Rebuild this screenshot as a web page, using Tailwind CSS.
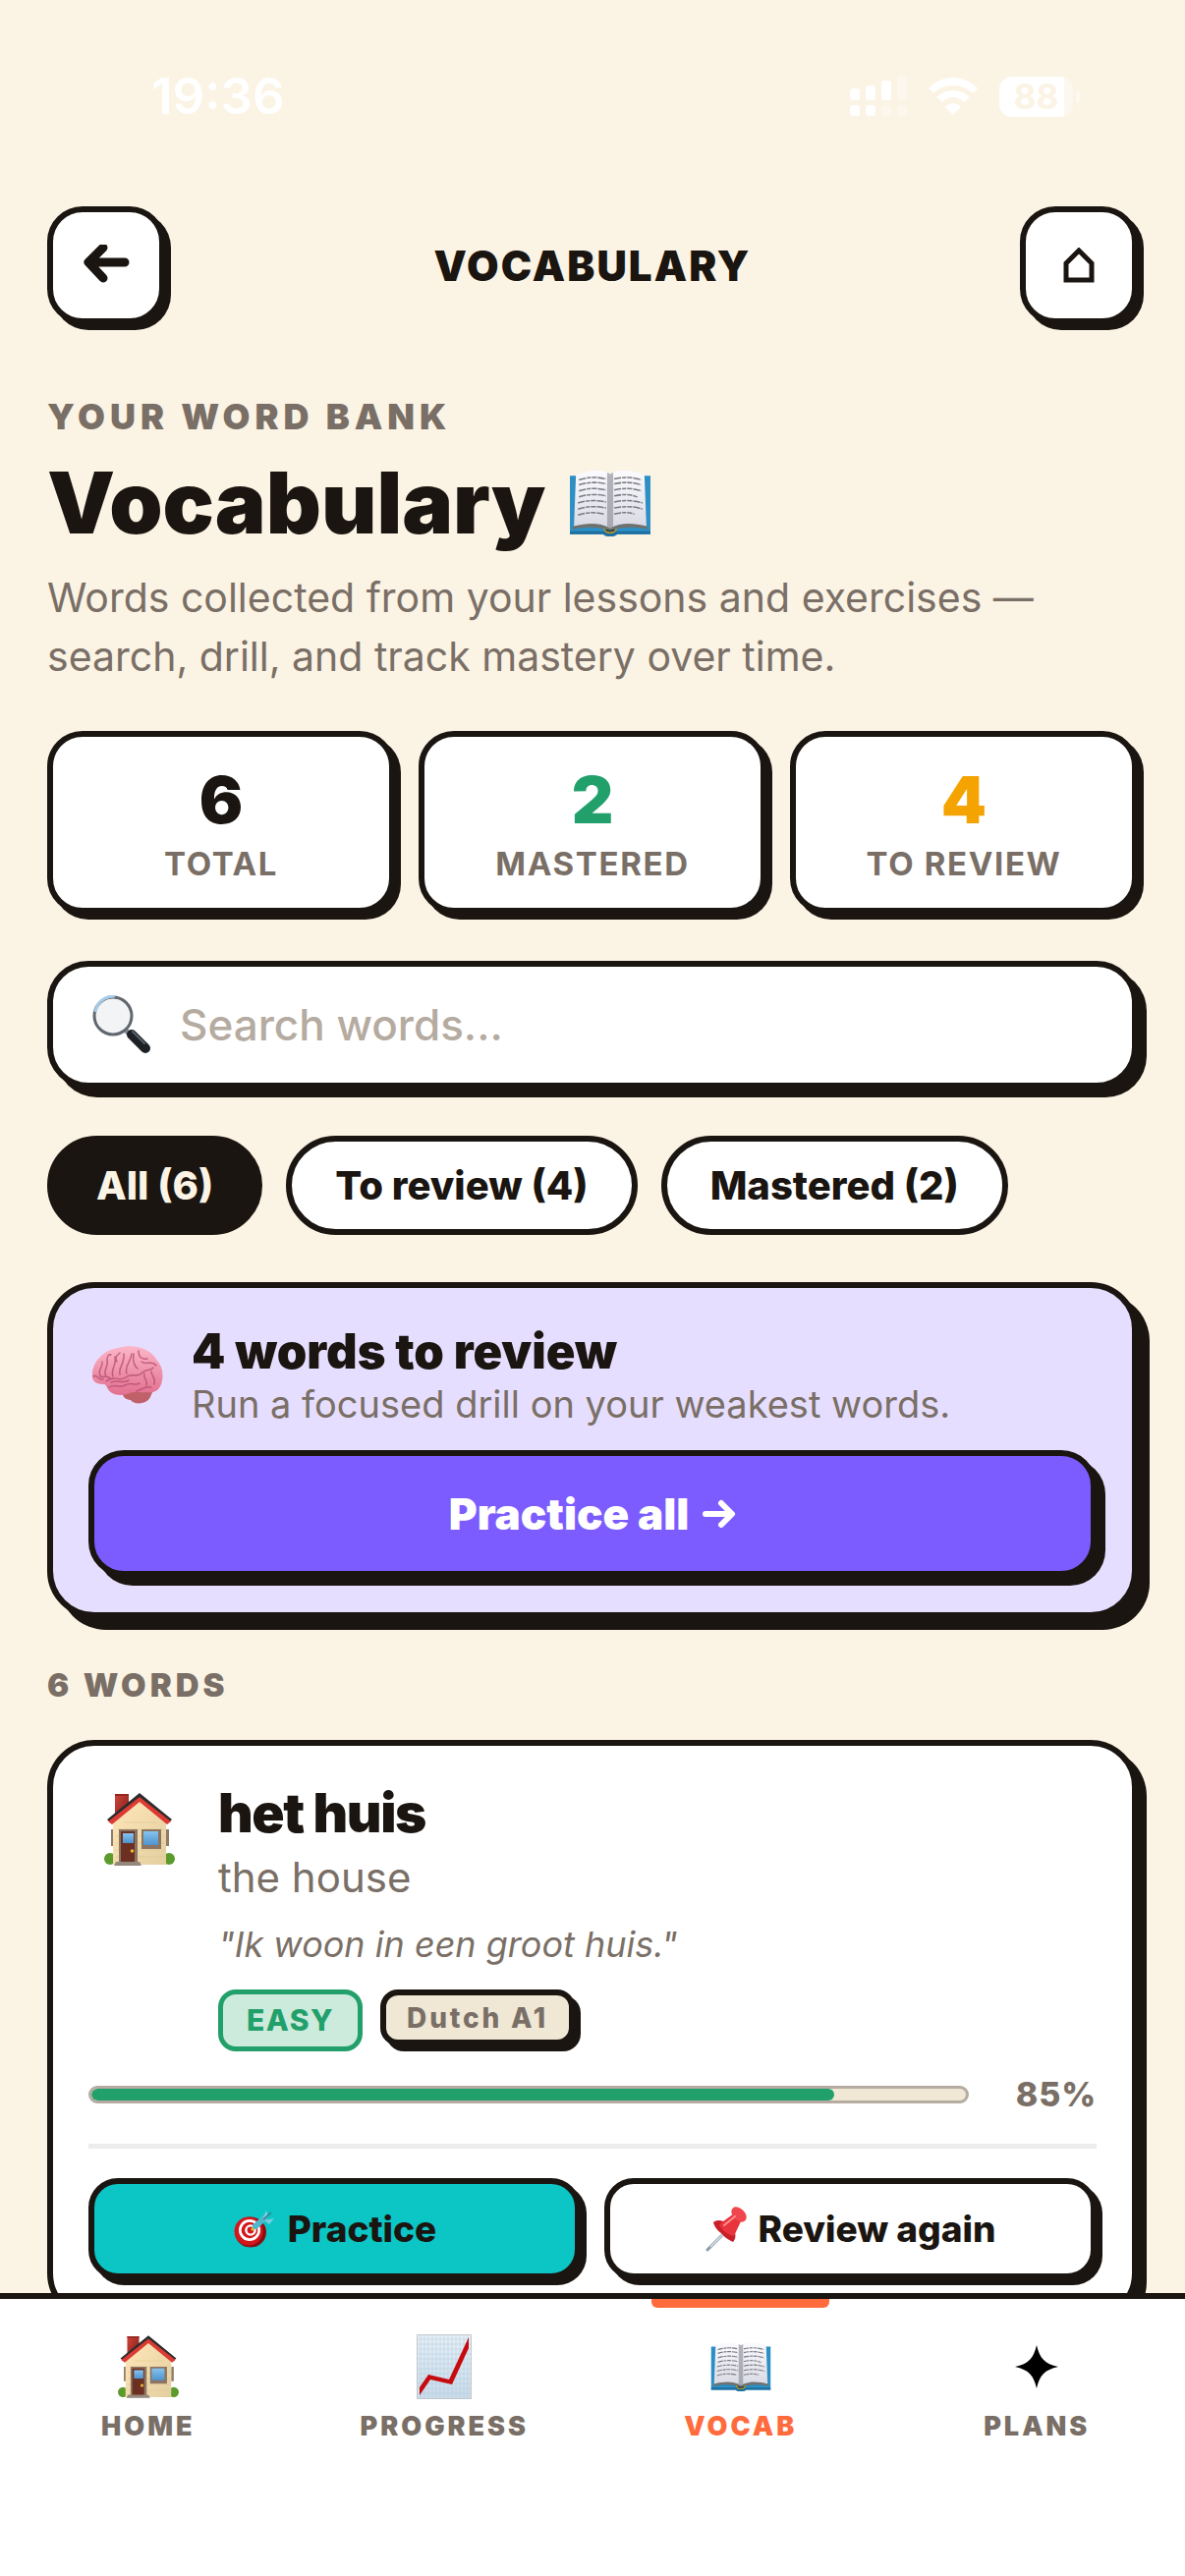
<!DOCTYPE html>
<html lang="en">

<head>
    <meta charset="UTF-8">
    <meta name="viewport" content="width=device-width, initial-scale=1.0">
    <title>Vocabulary</title>
    <script src="https://cdn.jsdelivr.net/npm/@tailwindcss/browser@4"></script>
</head>

<body class="h-screen flex flex-col bg-[#fbf3e4] text-[#1a1510] font-['Inter','Liberation_Sans',sans-serif]">
    <!-- Shared icons -->
    <svg class="absolute size-0" aria-hidden="true">
        <defs>
            <linearGradient id="page" x1="0" y1="0" x2="0" y2="1">
                <stop offset="0" stop-color="#fbfbff" />
                <stop offset="1" stop-color="#d9d9e4" />
            </linearGradient>
            <linearGradient id="wall" x1="0" y1="0" x2="1" y2="1">
                <stop offset="0" stop-color="#ffe6b8" />
                <stop offset="1" stop-color="#e3cfa0" />
            </linearGradient>
            <linearGradient id="brick" x1="0" y1="0" x2="1" y2="1">
                <stop offset="0" stop-color="#d1453a" />
                <stop offset="1" stop-color="#7c1d18" />
            </linearGradient>
            <linearGradient id="glass" x1="0" y1="0" x2="0" y2="1">
                <stop offset="0" stop-color="#86c3ee" />
                <stop offset="1" stop-color="#4f94cf" />
            </linearGradient>
            <linearGradient id="pink" x1="0" y1="0" x2="0" y2="1">
                <stop offset="0" stop-color="#fbb6c8" />
                <stop offset="1" stop-color="#e2708f" />
            </linearGradient>
            <linearGradient id="sheet" x1="0" y1="0" x2="0" y2="1">
                <stop offset="0" stop-color="#e9eff5" />
                <stop offset="1" stop-color="#cbdbe8" />
            </linearGradient>
        </defs>
        <symbol id="icon-house" viewBox="0 0 72 74">
            <circle cx="6" cy="67" r="6" fill="#5d9a2c" />
            <circle cx="66" cy="67" r="6" fill="#5d9a2c" />
            <path d="M7 37h3v17H7zM63 37h3v17h-3z" fill="#8f7b68" />
            <path d="M9 30 36 7l27 23v43H9z" fill="url(#wall)" />
            <path d="M12 44h50M12 51h50M12 58h50M12 65h50M20 30h33M14 37h46" stroke="#dfc48f" stroke-width="1" opacity=".5" />
            <path d="M11 1h14v14L11 26z" fill="url(#brick)" />
            <path d="M11 1h14v2H11z" fill="#96261f" />
            <path d="M3 27 36 0l33 27-3 3L36 5 6 30z" fill="#2a2b2e" />
            <path d="M4 29 36 4l32 25-4 3L36 9 8 32z" fill="#db3b33" />
            <path d="M15 37h19v34H15z" fill="#8c7462" />
            <path d="M17 39h14v32H17z" fill="#6b3022" />
            <path d="M19 41h11v10H19z" fill="url(#glass)" />
            <circle cx="28.500" cy="59" r="1.800" fill="#f2b830" />
            <path d="M38 37h20v20H38z" fill="#8c7462" />
            <path d="M40 39h15v14H40z" fill="url(#glass)" />
            <path d="M12 70h24l2 4H10z" fill="#94877c" />
        </symbol>
        <symbol id="icon-book" viewBox="0 0 82 66">
            <path d="M1 6h80v58H48c-2 3-12 3-14 0H1z" fill="#2d8fc4" />
            <path d="M1 61h80v3H48c-2 3-12 3-14 0H1z" fill="#1d6f9f" />
            <path d="M35 58h12c0 6-12 6-12 0z" fill="#12455f" stroke="#c79a1c" stroke-width="1.500" />
            <path d="M4 56c14-4 26-4 37 2 11-6 23-6 37-2v3c-14-3-26-2-37 1-11-3-23-4-37-1z" fill="#72706b" />
            <path d="M7 5C20 0 32-1 41 4v54C30 52 18 53 5 56z" fill="url(#page)" />
            <path d="M75 5C62 0 50-1 41 4v54c11-6 23-5 36-2z" fill="url(#page)" />
            <path d="M38 3c2 0 3 1 3 2 0-1 1-2 3-2v54l-3 2-3-2z" fill="#8d8d98" opacity=".65" />
            <g fill="none" stroke="#7b7b82" stroke-width="1.500" stroke-dasharray="7 1 4 1 5 1">
                <path d="M10 10c9-3 18-3 27-1M10 15c9-3 18-3 27-1M10 21c9-3 18-3 27-1M10 27c9-3 18-3 27-1M9 33c9-3 19-3 28-1M9 39c9-3 19-3 28-1M9 45c9-3 16-3 26-1" />
                <path d="M45 9c9-2 18-2 27 1M45 14c9-2 18-2 27 1M45 20c9-2 18-2 27 1M45 26c9-2 15-2 23 1M45 32c9-2 19-2 28 1M45 38c9-2 19-2 28 1M45 44c8-2 14-2 20 0" />
            </g>
        </symbol>
    </svg>

    <!-- Status bar -->
    <div class="flex shrink-0 items-center justify-between pt-16 pb-[78px] pl-[154px] pr-[107px] text-white">
        <span class="text-[51px] leading-[68px] font-semibold">19:36</span>
        <div class="flex items-center gap-[22px]">
            <svg class="w-[58px] h-[42px]" viewBox="0 0 58 42" fill="currentColor" aria-hidden="true">
                <rect x="0" y="13" width="10" height="12" rx="3" />
                <rect x="16" y="10" width="10" height="15" rx="3" />
                <rect x="32" y="5" width="10" height="20" rx="3" />
                <rect x="48" y="0" width="10" height="25" rx="3" opacity=".3" />
                <rect x="0" y="30" width="10" height="11" rx="3" />
                <rect x="16" y="30" width="10" height="11" rx="3" />
                <rect x="32" y="30" width="10" height="11" rx="3" opacity=".3" />
                <rect x="48" y="30" width="10" height="11" rx="3" opacity=".3" />
            </svg>
            <svg class="w-[50px] h-[38px]" viewBox="0 0 50 38" fill="currentColor" aria-hidden="true">
                <path d="M25 0c10 0 19 4 25 11l-5 5C40 11 33 8 25 8S10 11 5 16l-5-5C6 4 15 0 25 0z" />
                <path d="M25 13c7 0 12 3 17 7l-6 5c-3-3-6-5-11-5s-8 2-11 5l-6-5c5-4 10-7 17-7z" />
                <path d="M25 38l-8-8c4-5 12-5 16 0z" />
            </svg>
            <div class="flex items-center gap-[3px]">
                <span class="flex h-[41px] w-[75px] items-center justify-center rounded-[13px] bg-linear-to-r from-white from-88% to-white/40 to-88% text-[35px] font-bold text-[#fbf3e4]">88</span>
                <span class="h-[13px] w-1 rounded-r-full bg-white/50"></span>
            </div>
        </div>
    </div>

    <main class="min-h-0 flex-1 overflow-y-auto px-12 [scrollbar-width:none]">
        <header class="flex items-center justify-between">
            <button type="button" aria-label="Back" class="flex size-[120px] items-center justify-center rounded-[36px] border-6 border-[#1a1510] bg-white shadow-[6px_6px_0_#1a1510]">
                <svg class="w-12 h-[42px]" viewBox="0 0 48 42" fill="none" stroke="currentColor" stroke-width="9" stroke-linecap="round" stroke-linejoin="round" aria-hidden="true">
                    <path d="M43 18H7M21 3 6 18l15 16" />
                </svg>
            </button>
            <span class="text-[42px] font-black tracking-wider">VOCABULARY</span>
            <button type="button" aria-label="Home" class="flex size-[120px] items-center justify-center rounded-[36px] border-6 border-[#1a1510] bg-white shadow-[6px_6px_0_#1a1510]">
                <svg class="w-8 h-9" viewBox="0 0 32 36" fill="none" stroke="currentColor" stroke-width="5" aria-hidden="true">
                    <path d="M3 33V16L16 3l13 13v17z" />
                </svg>
            </button>
        </header>

        <section class="mt-[70px]">
            <p class="text-[36px] leading-[48px] font-black tracking-[5px] text-[#7a6f66]">YOUR WORD BANK</p>
            <h1 class="mt-4 flex items-center gap-6 text-[87px] leading-[96px] font-black">
                Vocabulary
                <svg class="w-[84px] h-[68px]" aria-hidden="true"><use href="#icon-book" /></svg>
            </h1>
            <p class="mt-[18px] text-[41px] leading-[60px] text-[#7a6f66]">Words collected from your lessons and exercises — search, drill, and track mastery over time.</p>
        </section>

        <section class="mt-[46px] grid grid-cols-3 gap-6 text-center">
            <div class="rounded-[36px] border-6 border-[#1a1510] bg-white pt-7 pb-[22px] shadow-[6px_6px_0_#1a1510]">
                <p class="text-[66px] leading-[72px] font-black">6</p>
                <p class="mt-[6px] text-[33px] leading-[46px] font-bold tracking-wider text-[#7a6f66]">TOTAL</p>
            </div>
            <div class="rounded-[36px] border-6 border-[#1a1510] bg-white pt-7 pb-[22px] shadow-[6px_6px_0_#1a1510]">
                <p class="text-[66px] leading-[72px] font-black text-[#22a06b]">2</p>
                <p class="mt-[6px] text-[33px] leading-[46px] font-bold tracking-wider text-[#7a6f66]">MASTERED</p>
            </div>
            <div class="rounded-[36px] border-6 border-[#1a1510] bg-white pt-7 pb-[22px] shadow-[6px_6px_0_#1a1510]">
                <p class="text-[66px] leading-[72px] font-black text-[#f5a300]">4</p>
                <p class="mt-[6px] text-[33px] leading-[46px] font-bold tracking-wider text-[#7a6f66]">TO REVIEW</p>
            </div>
        </section>

        <label class="mt-12 flex h-[130px] items-center gap-[30px] rounded-[42px] border-6 border-[#1a1510] bg-white pl-[39px] pr-9 shadow-[9px_9px_0_#1a1510]">
            <svg class="w-[60px] h-[60px] shrink-0" viewBox="0 0 60 60" aria-hidden="true">
                <path d="m35 36 6 5" stroke="#8b8f94" stroke-width="5" />
                <path d="m41 40 14 14" stroke="#1d2126" stroke-width="10" stroke-linecap="round" />
                <path d="m42 37 12 12" stroke="#59616a" stroke-width="2" stroke-linecap="round" />
                <circle cx="22" cy="21" r="19" fill="#f3f4f5" stroke="#60676f" stroke-width="3" />
                <path d="M4 17A19 19 0 0 1 24 1" fill="none" stroke="#a8cbe8" stroke-width="3" />
            </svg>
            <input type="text" aria-label="Search words" placeholder="Search words..." class="min-w-0 flex-1 text-[44px] font-medium outline-none placeholder:text-[#b5aba0]">
        </label>

        <div class="mt-12 flex gap-6">
            <button type="button" class="h-[101px] rounded-full border-6 border-[#1a1510] bg-[#1a1510] px-11 text-[40px] font-extrabold text-[#fbf3e4]">All (6)</button>
            <button type="button" class="h-[101px] rounded-full border-6 border-[#1a1510] bg-white px-11 text-[40px] font-extrabold">To review (4)</button>
            <button type="button" class="h-[101px] rounded-full border-6 border-[#1a1510] bg-white px-11 text-[40px] font-extrabold">Mastered (2)</button>
        </div>

        <!-- Review banner -->
        <section class="mt-12 rounded-[48px] border-6 border-[#1a1510] bg-[#e6deff] p-9 shadow-[12px_12px_0_#1a1510]">
            <div class="flex items-center gap-7 pl-[3px]">
                <svg class="w-[74px] h-[60px] shrink-0" viewBox="0 0 74 60" aria-hidden="true">
                    <path d="M33 47c-3 4 2 8 7 8 3 5 16 5 20-3l3-7z" fill="#c0616a" />
                    <path d="M1 31C0 17 12 4 27 2 44-3 61 3 67 15c7 7 6 19 4 24-3 8-9 9-15 8-6 1-12-1-17 1-7 3-18 3-22-4-2-3-2-5-5-5C4 39 1 35 1 31z" fill="url(#pink)" />
                    <g fill="none" stroke="#b84d72" stroke-width="1.500" stroke-linecap="round" opacity=".8">
                        <path d="M9 30c-3-5 3-9 2-14M15 31c-4-6 3-10 1-17 0-4 2-6 4-5M22 31c-3-7 4-11 2-20M29 29c-2-7 5-10 4-21M36 28c-3-7 4-11 5-20M9 31c4 2 7-2 10 2M15 36c8-7 14 1 20-4 6-5 12 1 17-5 4-4 8-1 11-5M43 8c-1 6-1 11 4 15M48 5c0 7 4 9 9 8M51 16c5 4 11-2 15 4M18 42c6-4 10 1 16-2 7-4 9 1 15-2M20 37c7-3 11 2 18-2M54 28c-2 6 4 6 2 12M61 26c0 5 5 6 3 13M2 31c4-3 4 4 10 3M29 7c-4 3-5 6-3 9M46 46c6-2 8-5 15-4" />
                    </g>
                </svg>
                <div>
                    <h2 class="text-[49px] leading-[58px] font-black">4 words to review</h2>
                    <p class="text-[38px] leading-[48px] text-[#7a6f66]">Run a focused drill on your weakest words.</p>
                </div>
            </div>
            <button type="button" class="mt-[23px] flex h-[129px] w-full items-center justify-center gap-[14px] rounded-[36px] border-6 border-[#1a1510] bg-[#7c5cff] text-[44px] font-black text-white shadow-[9px_9px_0_#1a1510]">
                Practice all
                <svg class="w-[34px] h-[30px]" viewBox="0 0 34 30" fill="none" stroke="currentColor" stroke-width="6" stroke-linecap="round" stroke-linejoin="round" aria-hidden="true">
                    <path d="M3 15h26M19 4l11 11-11 11" />
                </svg>
            </button>
        </section>

        <p class="mt-11 text-[33px] leading-[48px] font-black tracking-[4px] text-[#7a6f66]">6 WORDS</p>

        <!-- Word card -->
        <article class="mt-8 mb-12 rounded-[48px] border-6 border-[#1a1510] bg-white px-9 pt-8 pb-9 shadow-[9px_9px_0_#1a1510]">
            <div class="flex items-start gap-11 pl-4">
                <svg class="mt-4 w-[72px] h-[74px] shrink-0" aria-hidden="true"><use href="#icon-house" /></svg>
                <div>
                    <h3 class="text-[55px] leading-[72px] font-black tracking-tight">het huis</h3>
                    <p class="text-[42px] leading-[60px] text-[#7a6f66]">the house</p>
                    <p class="mt-2 text-[36px] leading-[60px] italic text-[#7a6f66]">"Ik woon in een groot huis."</p>
                    <div class="mt-4 flex items-start gap-[18px]">
                        <span class="flex h-[63px] items-center rounded-[18px] border-5 border-[#22a06b] bg-[#cdebdc] px-6 text-[30px] font-extrabold tracking-wider text-[#22a06b]">EASY</span>
                        <span class="flex h-[57px] items-center rounded-[18px] border-6 border-[#1a1510] bg-[#f0e8d5] px-[21px] text-[28px] font-extrabold tracking-widest text-[#7a6f66] shadow-[6px_6px_0_#1a1510]">Dutch A1</span>
                    </div>
                </div>
            </div>
            <div class="mt-5 flex items-center justify-between gap-12">
                <div class="h-[18px] flex-1 overflow-hidden rounded-full border-3 border-[#b5aba0] bg-[#f0e8d5]" role="progressbar" aria-label="Mastery" aria-valuenow="85" aria-valuemin="0" aria-valuemax="100">
                    <div class="h-full rounded-full bg-[#22a06b]" style="width: 85%"></div>
                </div>
                <span class="text-[34px] leading-[48px] font-extrabold tracking-wide text-[#7a6f66]">85%</span>
            </div>
            <div class="mt-[26px] grid grid-cols-2 gap-6 border-t-5 border-[#ececec] pt-[30px]">
                <button type="button" class="flex h-[103px] items-center justify-center gap-3 rounded-[30px] border-6 border-[#1a1510] bg-[#0cc5c5] text-[37px] font-extrabold shadow-[6px_6px_0_#1a1510]">
                    <svg class="w-[44px] h-[40px]" viewBox="0 0 44 40" aria-hidden="true">
                        <ellipse cx="18" cy="23" rx="16" ry="15.500" fill="#8c0d12" />
                        <ellipse cx="16" cy="22" rx="14.500" ry="14.500" fill="#d3161c" />
                        <circle cx="17" cy="21" r="11" fill="#fff" />
                        <circle cx="17" cy="21" r="8.300" fill="#d3161c" />
                        <circle cx="18" cy="21" r="5.800" fill="#fff" />
                        <circle cx="18" cy="21" r="3.400" fill="#d3161c" />
                        <path d="m19 21 5-5" stroke="#e8b423" stroke-width="3" />
                        <path d="m23 17 9-8" stroke="#4db9ce" stroke-width="6" stroke-linecap="round" />
                        <path d="m30 10 4-9 2 6zM32 11l10-2-5 6z" fill="#79cfe0" />
                        <path d="m31 10 8-7" stroke="#3a7887" stroke-width="1.500" />
                    </svg>
                    Practice
                </button>
                <button type="button" class="flex h-[103px] items-center justify-center gap-3 rounded-[30px] border-6 border-[#1a1510] bg-white text-[37px] font-extrabold shadow-[6px_6px_0_#1a1510]">
                    <svg class="w-[42px] h-[46px]" viewBox="0 0 42 46" aria-hidden="true">
                        <path d="M20 26 2 44" stroke="#8e9aa6" stroke-width="3" stroke-linecap="round" />
                        <path d="M19 27 5 41" stroke="#dbe5ee" stroke-width="1.500" />
                        <path d="M8 16c4-4 12-2 18 4 5 5 6 12 2 16-4-2-8-4-11-8-4-3-8-7-9-12z" fill="#c91f28" />
                        <path d="M14 18 29 7l7 8-7 15c-6-1-13-6-15-12z" fill="#e8343c" />
                        <ellipse cx="34" cy="8" rx="9" ry="6" transform="rotate(45 34 8)" fill="#f0474e" />
                        <path d="m19 19 11-9" stroke="#ff8d90" stroke-width="2" stroke-linecap="round" />
                    </svg>
                    Review again
                </button>
            </div>
        </article>
    </main>

    <nav class="grid shrink-0 grid-cols-4 border-t-6 border-[#1a1510] bg-white pb-[134px] text-[27px] leading-9 font-black tracking-[3px] text-[#7a6f66]">
        <a href="#" class="flex flex-col items-center gap-[10px] pt-9">
            <span class="flex h-[66px] items-center"><svg class="w-[62px] h-[64px]" aria-hidden="true"><use href="#icon-house" /></svg></span>
            HOME
        </a>
        <a href="#" class="flex flex-col items-center gap-[10px] pt-9">
            <svg class="w-[56px] h-[66px]" viewBox="0 0 56 66" aria-hidden="true">
                <path d="M0 0h56v66H0z" fill="url(#sheet)" />
                <path d="M4 0v66M8 0v66M12 0v66M16 0v66M20 0v66M24 0v66M28 0v66M32 0v66M36 0v66M40 0v66M44 0v66M48 0v66M52 0v66M0 5h56M0 10h56M0 15h56M0 20h56M0 25h56M0 30h56M0 35h56M0 40h56M0 45h56M0 50h56M0 55h56M0 60h56" stroke="#a9cbe3" stroke-width="1" opacity=".5" />
                <path d="M.5.5h55v65H.5z" fill="none" stroke="#c3c9ce" />
                <path d="M3 54 12 41l21 5L53 3v11L36 51l-22-5L3 62z" fill="#c60a0d" />
            </svg>
            PROGRESS
        </a>
        <a href="#" aria-current="page" class="relative flex flex-col items-center gap-[10px] pt-9 text-[#ff6b3d]">
            <span class="absolute top-0 h-[9px] w-3/5 rounded-b-[6px] bg-[#ff6b3d]"></span>
            <span class="flex h-[66px] items-center"><svg class="w-[62px] h-[50px]" aria-hidden="true"><use href="#icon-book" /></svg></span>
            VOCAB
        </a>
        <a href="#" class="flex flex-col items-center gap-[10px] pt-9">
            <span class="flex h-[66px] items-center">
                <svg class="size-[44px]" viewBox="0 0 44 44" aria-hidden="true">
                    <path d="M22 0c3 13 8 19 22 22-14 3-19 9-22 22C19 31 14 25 0 22 14 19 19 13 22 0z" fill="#000" />
                </svg>
            </span>
            PLANS
        </a>
    </nav>
</body>

</html>
